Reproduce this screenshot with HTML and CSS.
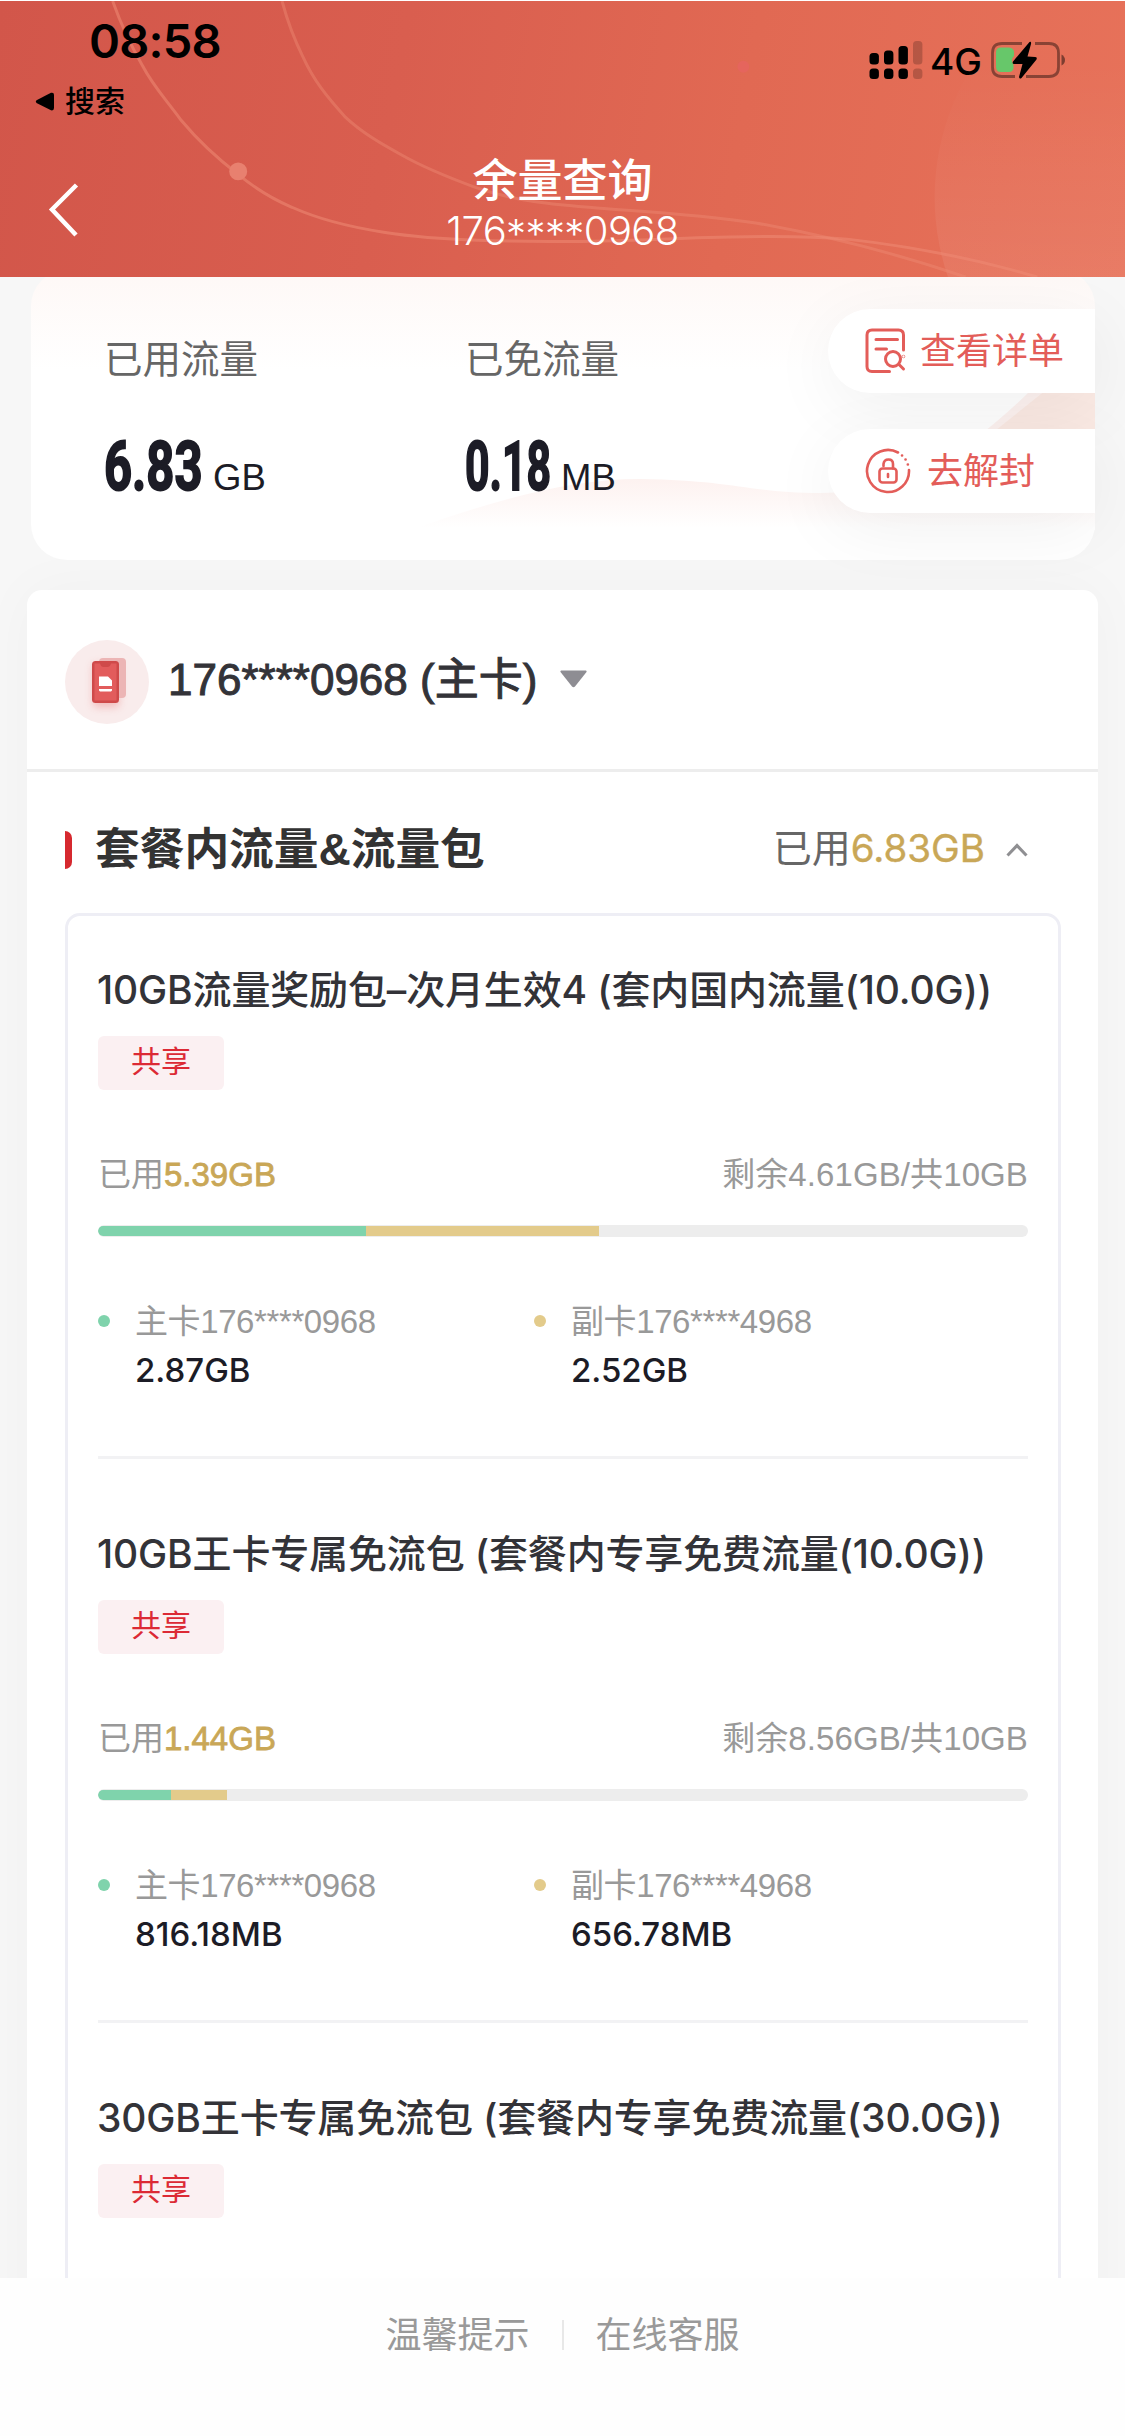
FILE: index.html
```html
<!DOCTYPE html>
<html lang="zh-CN">
<head>
    <meta charset="UTF-8">
    <meta name="viewport" content="width=device-width, initial-scale=1.0">
    <title>余量查询</title>
    <link rel="stylesheet" href="styles.css">
</head>
<body>

    <header>
        <svg class="header-bg" viewBox="0 0 1125 277" fill="none">
            <defs>
                <linearGradient id="ball" x1="0" y1="0" x2="0" y2="1">
                    <stop offset="0.22" stop-color="#fff" stop-opacity="0"/>
                    <stop offset="0.66" stop-color="#fff" stop-opacity="0.07"/>
                </linearGradient>
            </defs>
            <circle cx="1182" cy="197" r="246" fill="url(#ball)"/>
            <path d="M111 0C121 28 130 46 141 65C152 86 164 98 180 120C200 144 216 158 237 174C254 188 272 199 291 207C320 220 350 227 383 232C415 237 445 239 478 240C550 243 620 241 686 238C750 236 800 235 848 239C910 246 975 258 1039 277" stroke="#ee8a74" stroke-opacity="0.55" stroke-width="3"/>
            <path d="M281 0C287 22 293 38 302 56C313 80 326 96 344 116C361 132 380 143 402 155C425 168 448 177 475 187C515 201 550 204 600 208C640 211 700 214 758 223C830 236 900 254 967 277" stroke="#ee8a74" stroke-opacity="0.45" stroke-width="3"/>
            <circle cx="237" cy="171" r="9" fill="#e8806f"/>
            <circle cx="744" cy="66" r="6" fill="#e5655d"/>
        </svg>
        <div class="status">
            <div class="status-left">
                <div class="time">08:58</div>
                <div class="back-app">
                    <svg width="20" height="20" viewBox="0 0 20 20"><path d="M1.5 8.2 16 .8Q19 0 19 3V16Q19 19 16 18.300L1.500 11Q0 9.500 1.500 8.200Z"/></svg>
                    <span>搜索</span>
                </div>
            </div>
            <div class="status-right">
                <svg width="54" height="40" viewBox="0 0 54 40">
                    <rect x="0.500" y="13" width="9.400" height="11.500" rx="3.500"/>
                    <rect x="15" y="10.500" width="9.400" height="14" rx="3.500"/>
                    <rect x="29.500" y="6" width="9.400" height="18.500" rx="3.500"/>
                    <rect x="44" y="1" width="9.400" height="23.500" rx="3.500" opacity="0.200"/>
                    <rect x="0.500" y="28.500" width="9.400" height="10.500" rx="3.500"/>
                    <rect x="15" y="28.500" width="9.400" height="10.500" rx="3.500"/>
                    <rect x="29.500" y="28.500" width="9.400" height="10.500" rx="3.500"/>
                    <rect x="44" y="28.500" width="9.400" height="10.500" rx="3.500" opacity="0.200"/>
                </svg>
                <span class="net">4G</span>
                <svg width="76" height="40" viewBox="0 0 76 40">
                    <path d="M32 3.500H12Q2.500 3.500 2.500 13V27Q2.500 36.500 12 36.500H25M45 3.500H59Q68.500 3.500 68.500 13V27Q68.500 36.500 59 36.500H36" fill="none" stroke="#000" stroke-opacity="0.400" stroke-width="2.800"/>
                    <path d="M71.500 14.500Q75 16.500 75 20Q75 23.500 71.500 25.500Z" opacity="0.450"/>
                    <path d="M11 7.500H19Q24 8 24 12V16Q20 20 23.500 24.500V28Q23 32 19 32H11Q6 32 6 27V12.500Q6 7.500 11 7.500Z" fill="#67c76a"/>
                    <path d="M39.500 2L23 21.500Q22 24 24 24L32.500 24L29 37Q29.500 39.500 31.500 38L46.500 19.500Q47.500 17 45 17L37.500 16.500L41 4Q41.500 1 39.500 2Z"/>
                </svg>
            </div>
        </div>
        <div class="navbar">
            <svg class="back" width="32" height="54" viewBox="0 0 32 54" fill="none"><path d="M28.500 2 4 26.500 28 52" stroke="#fff" stroke-width="4.500"/></svg>
            <div class="title">
                <h1>余量查询</h1>
                <p>176<span class="stars">****</span>0968</p>
            </div>
        </div>
    </header>

    <main>
        <section class="summary">
            <svg class="wave" viewBox="0 0 1064 290" fill="none">
                <defs>
                    <linearGradient id="w" x1="0" y1="210" x2="0" y2="258" gradientUnits="userSpaceOnUse">
                        <stop offset="0" stop-color="#fdf2f0"/>
                        <stop offset="1" stop-color="#fff"/>
                    </linearGradient>
                </defs>
                <path d="M380 260C470 228 540 209 609 209C700 210 720 223 790 223C880 223 950 170 1000 120L1064 80V260Z" fill="url(#w)"/>
                <path d="M960 164 1030 108 1064 90V210H900Z" fill="#fbeae4"/>
            </svg>
            <div class="stat">
                <span class="stat-label">已用流量</span>
                <div class="stat-value"><span class="num"><b>6.83</b></span><span class="unit">GB</span></div>
            </div>
            <div class="stat">
                <span class="stat-label">已免流量</span>
                <div class="stat-value"><span class="num num-small"><b>0.18</b></span><span class="unit">MB</span></div>
            </div>
            <div class="actions">
                <a class="action" href="#">
                    <svg width="44" height="46" viewBox="0 0 44 46" fill="none" stroke="#e35d59" stroke-width="3" stroke-linecap="round">
                        <path d="M24.500 43.500H7Q2 43.500 2 38.500V7Q2 2 7 2H33.500Q38.500 2 38.500 7V22M11 11.500H32.500M11 21H21.500M34 36.500 38.500 41"/>
                        <circle cx="28" cy="31" r="7.500"/>
                        <circle cx="38.500" cy="28.500" r="0.300"/>
                    </svg>
                    <span>查看详单</span>
                </a>
                <a class="action unlock" href="#">
                    <svg width="46" height="46" viewBox="0 0 46 46" fill="none" stroke="#e35d59" stroke-width="2.600" stroke-linecap="round">
                        <path d="M33 4.500A21 21 0 1 0 44 22"/>
                        <path d="M37 7.500h.1M40.500 11.500h.1M42.800 16.500h.1"/>
                        <rect x="14.500" y="20.500" width="17" height="14" rx="3"/>
                        <path d="M18.500 18V16Q19 11.500 23.500 11.500Q28 11.500 28 16V20.500M23 26V29"/>
                    </svg>
                    <span>去解封</span>
                </a>
            </div>
        </section>

        <section class="detail">
            <div class="phone">
                <svg width="84" height="84" viewBox="0 0 84 84">
                    <defs>
                        <filter id="glow" x="-50%" y="-50%" width="200%" height="200%"><feGaussianBlur stdDeviation="4"/></filter>
                    </defs>
                    <circle cx="42" cy="42" r="42" fill="#f9ecec"/>
                    <rect x="28" y="24" width="26" height="43" rx="3" fill="#e35d5d" opacity="0.350" filter="url(#glow)"/>
                    <rect x="34" y="18" width="27" height="40" rx="4" fill="#ecb5b5"/>
                    <rect x="27" y="21" width="27" height="42" rx="3.500" fill="#cf4a4a"/>
                    <path d="M29.500 23.500H35Q36 27 38.500 27H42.500Q45 27 46 23.500H51.500V60.500H29.500Z" fill="#e25c5c"/>
                    <path d="M34 36.500H43L47 40.500V46H34ZM34 49H47V50.500L46 51.500H35L34 50.500Z" fill="#fff"/>
                </svg>
                <span class="phone-no">176****0968 (主卡)</span>
                <svg class="caret" width="27" height="18" viewBox="0 0 27 18"><path d="M1 .5H26Q27 1 26.500 2L15 16.500Q13.500 18 12 16.500L.5 2Q0 1 1 .5Z" fill="#8e8d93"/></svg>
            </div>

            <div class="group-head">
                <h2>套餐内流量&amp;流量包</h2>
                <span class="group-used">已用<em>6.83GB</em></span>
                <svg width="22" height="14" viewBox="0 0 22 14" fill="none"><path d="M1.500 12.500 11 2.500 20.500 12.500" stroke="#8f8f92" stroke-width="3"/></svg>
            </div>

            <div class="packages">
                <div class="package">
                    <h3>10GB流量奖励包–次月生效4 (套内国内流量(10.0G))</h3>
                    <span class="tag">共享</span>
                    <div class="usage">
                        <span>已用<em>5.39GB</em></span>
                        <span>剩余4.61GB/共10GB</span>
                    </div>
                    <div class="bar"><i class="main-bar" style="width: 28.800%"></i><i class="sub-bar" style="width: 25.100%"></i></div>
                    <div class="cards">
                        <div class="card"><span>主卡176****0968</span><strong>2.87GB</strong></div>
                        <div class="card sub"><span>副卡176****4968</span><strong>2.52GB</strong></div>
                    </div>
                </div>

                <div class="package">
                    <h3>10GB王卡专属免流包 (套餐内专享免费流量(10.0G))</h3>
                    <span class="tag">共享</span>
                    <div class="usage">
                        <span>已用<em>1.44GB</em></span>
                        <span>剩余8.56GB/共10GB</span>
                    </div>
                    <div class="bar"><i class="main-bar" style="width: 7.900%"></i><i class="sub-bar" style="width: 6%"></i></div>
                    <div class="cards">
                        <div class="card"><span>主卡176****0968</span><strong>816.18MB</strong></div>
                        <div class="card sub"><span>副卡176****4968</span><strong>656.78MB</strong></div>
                    </div>
                </div>

                <div class="package">
                    <h3>30GB王卡专属免流包 (套餐内专享免费流量(30.0G))</h3>
                    <span class="tag">共享</span>
                </div>
            </div>
        </section>
    </main>

    <footer>
        <a href="#">温馨提示</a>
        <span class="line"></span>
        <a href="#">在线客服</a>
    </footer>

</body>
</html>
```
FILE: styles.css
```css
* {
    box-sizing: border-box;
    margin: 0;
    padding: 0;
}

body {
    display: flex;
    flex-direction: column;
    height: 2436px;
    overflow: hidden;
    background-color: #f7f7f7;
    font-family: "Liberation Sans", "Noto Sans CJK SC", sans-serif;
    color: #333;
}

a {
    text-decoration: none;
    color: inherit;
}

em {
    font-style: normal;
    color: #c9a757;
}

svg {
    display: block;
    flex: none;
}

/* header */
header {
    position: relative;
    flex: none;
    height: 277px;
    border-top: 1px solid #fff;
    background: linear-gradient(100deg, #d2564a 0%, #d95e4f 35%, #e16953 65%, #e7725a 100%);
    z-index: 2;
}

.header-bg {
    position: absolute;
    left: 0;
    top: 0;
    width: 1125px;
    height: 276px;
}

.status {
    position: relative;
    display: flex;
    justify-content: space-between;
    height: 140px;
    padding: 10px 59px 0 35px;
    color: #000;
}

.time {
    padding-left: 54px;
    font-family: Inter, sans-serif;
    font-size: 47px;
    font-weight: 600;
    line-height: 60px;
    letter-spacing: -0.8px;
}

.back-app {
    display: flex;
    align-items: center;
    gap: 10px;
    margin-top: 11px;
    font-size: 30px;
    font-weight: 500;
    line-height: 40px;
}

.status-right {
    display: flex;
    height: 40px;
    margin-top: 29px;
}

.net {
    margin: 0 8px 0 7px;
    font-family: Inter, sans-serif;
    font-size: 37px;
    font-weight: 500;
    line-height: 43px;
}

.navbar {
    position: relative;
    height: 136px;
    text-align: center;
    color: #fff;
}

.back {
    position: absolute;
    left: 48px;
    top: 42px;
}

.title h1 {
    padding-top: 13px;
    font-size: 45px;
    font-weight: 500;
    line-height: 56px;
}

.title p {
    margin-top: -3px;
    font-family: Inter, sans-serif;
    font-size: 40px;
    font-weight: 300;
    line-height: 48px;
    letter-spacing: -0.6px;
}

.stars {
    position: relative;
    top: 3px;
}

/* summary card */
main {
    flex: 1;
    overflow: hidden;
}

.summary {
    position: relative;
    display: flex;
    width: 1064px;
    height: 290px;
    margin: -7px 0 0 31px;
    padding-left: 73px;
    border-radius: 36px;
    background: linear-gradient(#fef8f6, #fff 100px);
}

.wave {
    position: absolute;
    left: 0;
    top: 0;
    width: 1064px;
    height: 290px;
}

.stat {
    position: relative;
    width: 361px;
    padding-top: 65px;
}

.stat-label {
    display: block;
    font-size: 38.5px;
    line-height: 50px;
    color: #666;
}

.stat-value {
    display: flex;
    align-items: baseline;
    margin-top: 46px;
    line-height: 72px;
    color: #1c1c26;
}

.num {
    width: 109px;
}

.num b {
    display: inline-block;
    font-family: Roboto, sans-serif;
    font-size: 69px;
    transform: scaleX(0.71);
    transform-origin: left;
    -webkit-text-stroke: 2px #1c1c26;
}

.num-small {
    width: 96px;
}

.num-small b {
    transform: scaleX(0.62);
}

.unit {
    font-size: 36.5px;
}

.actions {
    position: relative;
    display: flex;
    flex-direction: column;
    gap: 36px;
    width: 267px;
    margin-left: auto;
    padding-top: 39px;
}

.action {
    display: flex;
    align-items: center;
    gap: 11px;
    height: 84px;
    padding-left: 37px;
    border-radius: 42px 0 0 42px;
    background-color: #fff;
    box-shadow: 0 15px 70px rgba(0, 0, 0, 0.06);
    font-size: 36px;
    line-height: 48px;
    color: #e35d59;
}

.action span {
    margin-top: 1px;
}

.unlock {
    gap: 16px;
}

/* detail card */
.detail {
    width: 1071px;
    height: 1750px;
    margin: 30px 0 0 27px;
    border-radius: 15px;
    background-color: #fff;
    box-shadow: 0 0 60px rgba(0, 0, 0, 0.03);
}

.phone {
    display: flex;
    align-items: center;
    height: 182px;
    padding: 4px 0 0 38px;
    border-bottom: 3px solid #ededed;
}

.phone-no {
    margin: -3px 23px 0 19px;
    font-size: 44px;
    line-height: 60px;
    color: #333338;
    -webkit-text-stroke: 1px #333338;
}

.caret {
    margin-top: -6px;
}

.group-head {
    display: flex;
    align-items: center;
    height: 141px;
    padding: 15px 70px 0 38px;
}

.group-head h2 {
    display: flex;
    align-items: center;
    font-size: 44.7px;
    font-weight: bold;
    line-height: 60px;
}

.group-head h2::before {
    content: '';
    width: 7px;
    height: 38px;
    margin-right: 23px;
    border-radius: 0 7px 7px 0;
    background-color: #d6292f;
}

.group-used {
    margin: -3px 21px 0 auto;
    font-size: 39px;
    line-height: 54px;
    color: #666;
}

.group-used em {
    font-family: Inter, sans-serif;
    font-size: 38.5px;
    -webkit-text-stroke: 0.4px #c9a757;
}

.packages {
    height: 1500px;
    margin: 0 37px 0 38px;
    padding: 0 30px;
    border: 3px solid #eeeef5;
    border-radius: 15px;
}

.package {
    padding-top: 68px;
    border-bottom: 3px solid #f2f2f4;
}

.package:first-child {
    padding-top: 47px;
}

.package:last-child {
    border-bottom: none;
}

.package h3 {
    margin-left: -1px;
    font-family: Inter, "Noto Sans CJK SC", sans-serif;
    font-size: 39px;
    font-weight: 500;
    line-height: 54px;
    letter-spacing: -0.15px;
    white-space: nowrap;
    color: #333338;
}

.tag {
    display: block;
    width: 126px;
    height: 54px;
    margin-top: 19px;
    border-radius: 6px;
    background-color: #fbf0f2;
    font-size: 30px;
    line-height: 52px;
    text-align: center;
    color: #dc2a35;
}

.usage {
    display: flex;
    justify-content: space-between;
    margin-top: 60px;
    font-size: 33px;
    line-height: 50px;
    color: #999;
}

.usage em {
    -webkit-text-stroke: 0.8px #c9a757;
}

.usage span + span {
    letter-spacing: 0.1px;
}

.bar {
    display: flex;
    height: 12px;
    margin-top: 25px;
    padding: 1px 0;
    border-radius: 6px;
    background-color: #ededed;
    overflow: hidden;
}

.main-bar {
    border-radius: 5px 0 0 5px;
    background-color: #7fd3ac;
}

.sub-bar {
    background-color: #e3cb8b;
}

.cards {
    display: grid;
    grid-template-columns: 436px 1fr;
    margin: 61px 0 62px;
}

.card {
    position: relative;
    padding-left: 37px;
    font-size: 33px;
    line-height: 48px;
    color: #999;
}

.card span {
    letter-spacing: -0.4px;
}

.card::before {
    content: '';
    position: absolute;
    left: 0;
    top: 17px;
    width: 12px;
    height: 12px;
    border-radius: 50%;
    background-color: #7fd3ac;
}

.sub::before {
    background-color: #e3cb8b;
}

.card strong {
    display: block;
    font-family: Inter, sans-serif;
    font-size: 33px;
    font-weight: 500;
    color: #1c1c26;
}

/* bottom links */
footer {
    display: flex;
    justify-content: center;
    flex: none;
    height: 158px;
    padding-top: 32px;
    background-color: #fefefe;
    font-size: 36px;
    line-height: 52px;
    color: #999;
    z-index: 2;
}

.line {
    width: 2px;
    height: 30px;
    margin: 10px 32px 0;
    background-color: #e8e8e8;
}
```
